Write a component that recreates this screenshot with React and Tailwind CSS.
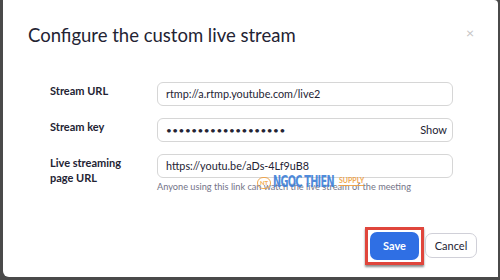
const Field = ({ label, children }) => {
  return (
    <div className="flex items-start">
      <div className="w-[107px] text-[11px] leading-[15px] font-bold text-[#232333] pt-[1px]">{label}</div>
      <div className="w-[296px]">{children}</div>
    </div>
  )
}

const App = () => {
  return (
    <div className="w-[500px] h-[280px] bg-[#4a4a4a] pl-[3px] pb-[3px] pr-[2px]" style={{ fontFamily: 'Lato, "Open Sans", sans-serif' }}>
      <div className="relative w-full h-full bg-white rounded-bl-[6px] rounded-tr-[4px] flex flex-col">
        <div className="flex items-start justify-between pl-[25px] pr-[24px] pt-[23px]">
          <span className="text-[18.5px] leading-[24px] text-[#232333]">Configure the custom live stream</span>
          <span className="text-[14px] leading-[14px] text-[#c4c4c4] mt-[3px]">×</span>
        </div>

        <div className="flex flex-col gap-[12px] pl-[47px] mt-[35px]">
          <Field label="Stream URL">
            <div className="h-[24px] border border-[#d6d6d6] rounded-[6px] flex items-center px-[8px] text-[10.8px] text-[#232333]">
              rtmp://a.rtmp.youtube.com/live2
            </div>
          </Field>
          <Field label="Stream key">
            <div className="h-[24px] border border-[#d6d6d6] rounded-[6px] flex items-center justify-between pl-[8px] pr-[5px] text-[11px] text-[#232333]">
              <span className="tracking-[0.5px] text-[10px]">•••••••••••••••••••</span>
              <span>Show</span>
            </div>
          </Field>
          <Field label={<>Live streaming<br />page URL</>}>
            <div className="relative">
              <div className="h-[24px] border border-[#d6d6d6] rounded-[6px] flex items-center px-[8px] text-[10.8px] text-[#232333]">
                https://youtu.be/aDs-4Lf9uB8
              </div>
              <div className="text-[9.2px] leading-[12px] text-[#747487] mt-[3px]">
                Anyone using this link can watch the live stream of the meeting
              </div>
              <div className="absolute left-[100px] top-[21px] flex items-end gap-[2px] opacity-90">
                <span className="w-[14px] h-[12px] rounded-full border border-[#f0a040] text-[6px] leading-[10px] text-center font-bold text-[#f0a040] mb-[1px]">NT</span>
                <span className="w-[64px] overflow-visible">
                  <span className="block text-[15px] leading-[15px] font-bold text-[#3d7fd8] tracking-[-1px] scale-x-[0.72] origin-left whitespace-nowrap" style={{ fontFamily: '"DejaVu Sans Condensed", "Liberation Sans", sans-serif' }}>NGOC THIEN</span>
                </span>
                <span className="text-[7px] leading-[10px] font-bold text-[#f0a040] self-start border-b border-[#f0a040]">SUPPLY</span>
              </div>
            </div>
          </Field>
        </div>

        <div className="flex-1" />

        <div className="flex items-center justify-end gap-[1px] pr-[21px] pb-[12px]">
          <div className="border-[3px] border-[#e0463c] p-[2px] shadow-[0_2px_2px_rgba(0,0,0,0.45)]">
            <button className="w-[49px] h-[28px] rounded-[7px] bg-[#2f6fe4] text-white text-[11px] font-bold">Save</button>
          </div>
          <button className="w-[52px] h-[25px] rounded-[7px] border border-[#d0d0d8] bg-white text-[#232333] text-[11px]">Cancel</button>
        </div>
      </div>
    </div>
  )
}

export default App;
